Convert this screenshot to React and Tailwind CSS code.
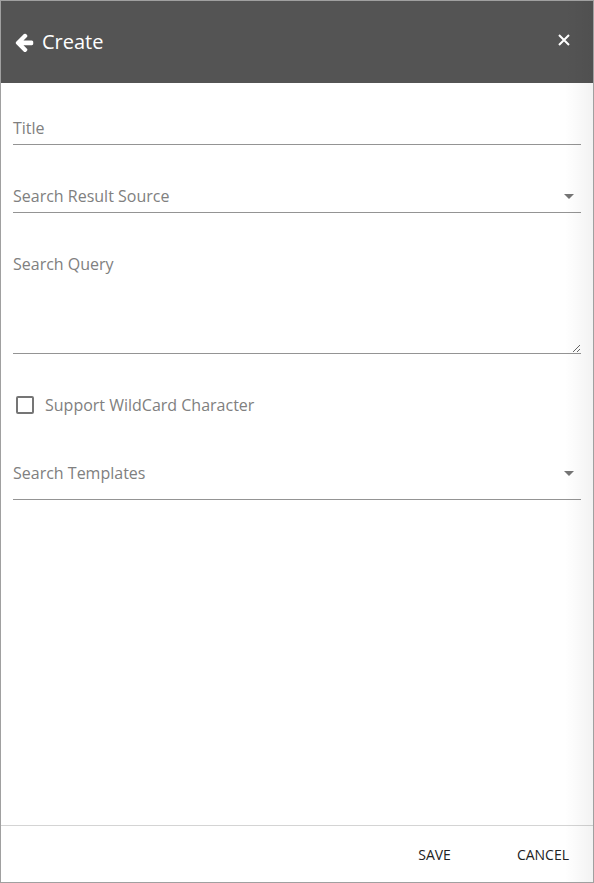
function ArrowLeftIcon() {
  return (
    <svg viewBox="128 128 1600 1600" className="size-[19px] fill-current" aria-hidden="true">
      <path d="M1664 896v128q0 53-32.500 90.500t-84.500 37.500h-704l293 294q38 36 38 90t-38 90l-75 76q-37 37-90 37-52 0-91-37l-651-652q-37-37-37-90 0-52 37-91l651-650q38-38 91-38 52 0 90 38l75 74q38 38 38 91t-38 91l-293 293h704q52 0 84.500 37.500t32.500 90.500z" />
    </svg>
  );
}

function CloseIcon() {
  return (
    <svg viewBox="0 0 12 12" className="size-3 stroke-current" strokeWidth="2" aria-hidden="true">
      <path d="M1 1l10 10M11 1L1 11" />
    </svg>
  );
}

function CaretIcon() {
  return (
    <svg
      viewBox="0 0 10 5"
      className="pointer-events-none mt-[14px] mr-[7px] h-[5px] w-[10px] justify-self-end fill-[#757575] [grid-area:1/1]"
      aria-hidden="true"
    >
      <path d="M0 0h10L5 5z" />
    </svg>
  );
}

const control =
  "w-full appearance-none bg-transparent text-base text-[#333] outline-none [grid-area:1/1]";

function Field({ id, label, className, children }) {
  return (
    <div className={`grid border-b border-[#949494] ${className}`}>
      <label
        htmlFor={id}
        className="pointer-events-none self-start leading-8 [grid-area:1/1]"
      >
        {label}
      </label>
      {children}
    </div>
  );
}

export default function App() {
  return (
    <div className="relative flex min-h-screen flex-col border border-[#a0a0a0] bg-white font-['Open_Sans',sans-serif] text-base text-[#808080]">
      <header className="flex h-[82px] shrink-0 items-center justify-between bg-[#545454] px-3 text-white">
        <div className="flex items-center gap-2 pl-0.5">
          <button type="button" aria-label="Back">
            <ArrowLeftIcon />
          </button>
          <h1 className="text-xl">Create</h1>
        </div>
        <button type="button" aria-label="Close" className="mb-1 p-[11px]">
          <CloseIcon />
        </button>
      </header>

      <form id="create-form" className="flex grow flex-col gap-[35px] px-3 pt-[29px]">
        <Field id="title" label="Title" className="h-[33px]">
          <input id="title" type="text" className={control} />
        </Field>

        <Field id="source" label="Search Result Source" className="h-[33px]">
          <select id="source" className={control} />
          <CaretIcon />
        </Field>

        <Field id="query" label="Search Query" className="min-h-[106px]">
          <textarea id="query" className={`resize-y leading-8 ${control}`} />
        </Field>

        <div className="flex h-[33px] items-center gap-[11px] pb-px pl-[3px]">
          <input
            id="wildcard"
            type="checkbox"
            className="size-[18px] appearance-none rounded-xs border-2 border-[#757575] checked:bg-[#757575]"
          />
          <label htmlFor="wildcard">Support WildCard Character</label>
        </div>

        <Field id="templates" label="Search Templates" className="h-[43px]">
          <select id="templates" className={control} />
          <CaretIcon />
        </Field>
      </form>

      <footer className="flex h-[57px] shrink-0 items-center justify-end gap-[34px] border-t border-[#d4d4d4] pt-px pr-2 text-sm text-[#222]">
        <button type="submit" form="create-form" className="px-4 py-2">
          SAVE
        </button>
        <button type="button" className="px-4 py-2">
          CANCEL
        </button>
      </footer>

      <div className="pointer-events-none absolute inset-y-0 right-0 w-7 bg-linear-to-r from-black/0 to-black/5" />
    </div>
  );
}
